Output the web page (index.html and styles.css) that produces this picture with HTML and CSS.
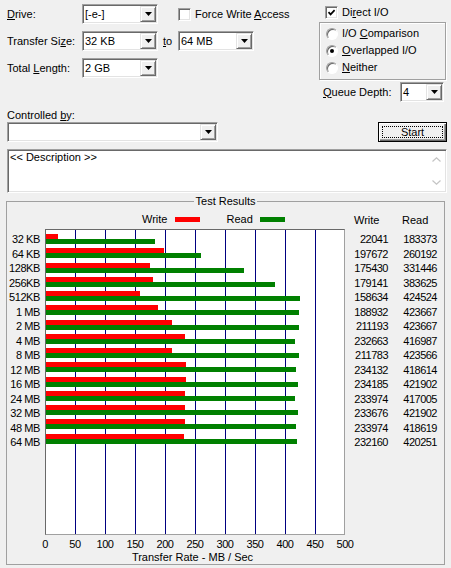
FILE: index.html
```html
<!DOCTYPE html>
<html>
<head>
<meta charset="utf-8">
<title>ATTO Disk Benchmark</title>
<link rel="stylesheet" href="styles.css">
</head>
<body>
<div class="top">
  <div class="left">
    <div class="row">
      <span class="lbl"><u>D</u>rive:</span>
      <div class="combo w76"><span class="val">[-e-]</span><span class="dd"><svg width="7" height="4" viewBox="0 0 7 4"><polygon points="0,0 7,0 3.5,4" fill="#000"/></svg></span></div>
      <div class="chk force"><span class="box"></span><span>Force Write <u>A</u>ccess</span></div>
    </div>
    <div class="row">
      <span class="lbl">Transfer Si<u>z</u>e:</span>
      <div class="combo w76"><span class="val">32 KB</span><span class="dd"><svg width="7" height="4" viewBox="0 0 7 4"><polygon points="0,0 7,0 3.5,4" fill="#000"/></svg></span></div>
      <span class="to"><u>t</u>o</span>
      <div class="combo w76"><span class="val">64 MB</span><span class="dd"><svg width="7" height="4" viewBox="0 0 7 4"><polygon points="0,0 7,0 3.5,4" fill="#000"/></svg></span></div>
    </div>
    <div class="row">
      <span class="lbl">Total <u>L</u>ength:</span>
      <div class="combo w76"><span class="val">2 GB</span><span class="dd"><svg width="7" height="4" viewBox="0 0 7 4"><polygon points="0,0 7,0 3.5,4" fill="#000"/></svg></span></div>
    </div>
  </div>
  <div class="right">
    <div class="chk direct"><span class="box"><svg width="9" height="9" viewBox="0 0 9 9"><path d="M1.5 4.2 L3.6 6.4 L7.6 2.2" fill="none" stroke="#000" stroke-width="1.7"/></svg></span><span>Di<u>r</u>ect I/O</span></div>
    <div class="radios">
      <div class="radio"><span class="circ"></span><span>I/O <u>C</u>omparison</span></div>
      <div class="radio"><span class="circ on"></span><span><u>O</u>verlapped I/O</span></div>
      <div class="radio"><span class="circ"></span><span><u>N</u>either</span></div>
    </div>
    <div class="queue">
      <span class="qlbl"><u>Q</u>ueue Depth:</span>
      <div class="combo w44"><span class="val">4</span><span class="dd"><svg width="7" height="4" viewBox="0 0 7 4"><polygon points="0,0 7,0 3.5,4" fill="#000"/></svg></span></div>
    </div>
  </div>
</div>

<div class="ctl-label">Controlled <u>b</u>y:</div>
<div class="ctl-row">
  <div class="combo w211"><span class="val"></span><span class="dd"><svg width="7" height="4" viewBox="0 0 7 4"><polygon points="0,0 7,0 3.5,4" fill="#000"/></svg></span></div>
  <div class="btn"><span>Start</span></div>
</div>

<div class="desc">
  <span class="dtext">&lt;&lt; Description &gt;&gt;</span>
  <div class="sb">
    <span class="arrow"><svg width="9" height="5" viewBox="0 0 9 5"><path d="M0.5 4.5 L4.5 0.8 L8.5 4.5" fill="none" stroke="#c4c4c4" stroke-width="1.2"/></svg></span>
    <span class="arrow"><svg width="9" height="5" viewBox="0 0 9 5"><path d="M0.5 0.5 L4.5 4.2 L8.5 0.5" fill="none" stroke="#c4c4c4" stroke-width="1.2"/></svg></span>
  </div>
</div>

<fieldset class="results">
  <legend>Test Results</legend>
  <div class="rgrid">
    <div class="clegend">
      <span>Write</span><span class="sw red sw-w"></span>
      <span class="rd">Read</span><span class="sw green sw-r"></span>
    </div>
    <div class="nhead"><span>Write</span><span class="hr">Read</span></div>

    <div class="labels">
      <div>32 KB</div><div>64 KB</div><div>128KB</div><div>256KB</div><div>512KB</div>
      <div>1 MB</div><div>2 MB</div><div>4 MB</div><div>8 MB</div><div>12 MB</div>
      <div>16 MB</div><div>24 MB</div><div>32 MB</div><div>48 MB</div><div>64 MB</div>
    </div>

    <div class="chart">
      <div class="brow"><div class="bar red" style="width:12.2px"></div><div class="bar green" style="width:109px"></div></div>
      <div class="brow"><div class="bar red" style="width:117.6px"></div><div class="bar green" style="width:155.1px"></div></div>
      <div class="brow"><div class="bar red" style="width:104.3px"></div><div class="bar green" style="width:197.9px"></div></div>
      <div class="brow"><div class="bar red" style="width:106.5px"></div><div class="bar green" style="width:229.2px"></div></div>
      <div class="brow"><div class="bar red" style="width:94.2px"></div><div class="bar green" style="width:253.7px"></div></div>
      <div class="brow"><div class="bar red" style="width:112.4px"></div><div class="bar green" style="width:253.2px"></div></div>
      <div class="brow"><div class="bar red" style="width:125.7px"></div><div class="bar green" style="width:253.2px"></div></div>
      <div class="brow"><div class="bar red" style="width:138.6px"></div><div class="bar green" style="width:249.2px"></div></div>
      <div class="brow"><div class="bar red" style="width:126.1px"></div><div class="bar green" style="width:253.1px"></div></div>
      <div class="brow"><div class="bar red" style="width:139.5px"></div><div class="bar green" style="width:250.2px"></div></div>
      <div class="brow"><div class="bar red" style="width:139.5px"></div><div class="bar green" style="width:252.1px"></div></div>
      <div class="brow"><div class="bar red" style="width:139.4px"></div><div class="bar green" style="width:249.2px"></div></div>
      <div class="brow"><div class="bar red" style="width:139.2px"></div><div class="bar green" style="width:252.1px"></div></div>
      <div class="brow"><div class="bar red" style="width:139.4px"></div><div class="bar green" style="width:250.2px"></div></div>
      <div class="brow"><div class="bar red" style="width:138.3px"></div><div class="bar green" style="width:251.2px"></div></div>
    </div>

    <div class="nums">
      <span>22041</span><span>183373</span>
      <span>197672</span><span>260192</span>
      <span>175430</span><span>331446</span>
      <span>179141</span><span>383625</span>
      <span>158634</span><span>424524</span>
      <span>188932</span><span>423667</span>
      <span>211193</span><span>423667</span>
      <span>232663</span><span>416987</span>
      <span>211783</span><span>423566</span>
      <span>234132</span><span>418614</span>
      <span>234185</span><span>421902</span>
      <span>233974</span><span>417005</span>
      <span>233676</span><span>421902</span>
      <span>233974</span><span>418619</span>
      <span>232160</span><span>420251</span>
    </div>

    <div class="axis">
      <div class="ticks">
        <span>0</span><span>50</span><span>100</span><span>150</span><span>200</span><span>250</span>
        <span>300</span><span>350</span><span>400</span><span>450</span><span>500</span>
      </div>
      <div class="atitle">Transfer Rate - MB / Sec</div>
    </div>
  </div>
</fieldset>
</body>
</html>
```

FILE: styles.css
```css
* { box-sizing: border-box; }

html, body { margin: 0; padding: 0; }

body {
  width: 451px;
  height: 568px;
  overflow: hidden;
  background: #f0f0f0;
  font-family: "Liberation Sans", Arial, sans-serif;
  font-size: 11px;
  line-height: 13px;
  color: #000;
}

u { text-decoration: underline; text-underline-offset: 1px; }

/* ---------- top controls ---------- */
.top { display: flex; padding-top: 4px; }

.left { width: 319px; padding-left: 7px; }

.row {
  display: flex;
  align-items: center;
  height: 20px;
  margin-bottom: 7px;
}

.lbl { width: 75px; flex: none; }

.combo {
  display: flex;
  flex: none;
  height: 20px;
  padding: 1px;
  background: #fff;
  border: 1px solid;
  border-color: #a0a0a0 #fff #fff #a0a0a0;
  box-shadow: inset 1px 1px #696969, inset -1px -1px #e3e3e3;
}

.w76 { width: 76px; }
.w44 { width: 44px; }
.w211 { width: 211px; }

.val {
  flex: 1;
  padding-left: 1px;
  line-height: 16px;
  white-space: nowrap;
}

.dd {
  width: 16px;
  height: 16px;
  display: flex;
  align-items: center;
  justify-content: center;
  background: #f0f0f0;
  border: 1px solid;
  border-color: #e3e3e3 #696969 #696969 #e3e3e3;
  box-shadow: inset 1px 1px #fff, inset -1px -1px #a0a0a0;
}

.dd svg { display: block; }

.to { width: 15px; margin-left: 5px; }

.chk { display: flex; align-items: center; white-space: nowrap; }

.force { margin-left: 20px; }

.box {
  width: 13px;
  height: 13px;
  flex: none;
  margin-right: 4px;
  display: flex;
  align-items: center;
  justify-content: center;
  background: #fff;
  border: 1px solid;
  border-color: #a0a0a0 #fff #fff #a0a0a0;
  box-shadow: inset 1px 1px #696969, inset -1px -1px #e3e3e3;
}

.box svg { display: block; }

.right { width: 127px; }

.direct { height: 16px; margin-left: 6px; }

.radios {
  margin-top: 2px;
  height: 58px;
  padding: 2px 0 0 6px;
  border: 1px solid #a0a0a0;
  box-shadow: inset 1px 1px #fff, 1px 1px #fff;
}

.radio { display: flex; align-items: center; height: 17px; white-space: nowrap; }

.circ {
  width: 12px;
  height: 12px;
  flex: none;
  margin-right: 4px;
  border-radius: 50%;
  background: #fff;
  border: 1px solid;
  border-color: #a0a0a0 #fff #fff #a0a0a0;
  box-shadow: inset 1px 1px #696969;
  display: flex;
  align-items: center;
  justify-content: center;
}

.circ.on::after {
  content: "";
  width: 4px;
  height: 4px;
  border-radius: 50%;
  background: #000;
}

.queue {
  display: flex;
  align-items: center;
  height: 20px;
  margin-top: 2px;
  padding-left: 4px;
}

.qlbl { width: 77px; flex: none; }

/* ---------- controlled by ---------- */
.ctl-label { margin: 7px 0 0 7px; }

.ctl-row {
  display: flex;
  justify-content: space-between;
  width: 440px;
  margin-left: 7px;
}

.btn {
  width: 69px;
  height: 20px;
  padding: 3px;
  background: #f0f0f0;
  border: 1px solid #000;
  box-shadow: inset 1px 1px #fff, inset -1px -1px #696969, inset -2px -2px #a0a0a0;
}

.btn span {
  display: flex;
  height: 100%;
  align-items: center;
  justify-content: center;
  border: 1px dotted #000;
}

/* ---------- description ---------- */
.desc {
  display: flex;
  width: 440px;
  height: 44px;
  margin: 7px 0 0 7px;
  padding: 1px;
  background: #fff;
  border: 1px solid;
  border-color: #a0a0a0 #fff #fff #a0a0a0;
  box-shadow: inset 1px 1px #696969, inset -1px -1px #e3e3e3;
}

.dtext { flex: 1; padding-left: 1px; }

.sb {
  width: 17px;
  display: flex;
  flex-direction: column;
  justify-content: space-between;
}

.arrow {
  height: 17px;
  display: flex;
  align-items: center;
  justify-content: center;
}

.arrow svg { display: block; }

/* ---------- results ---------- */
.results {
  margin: 2px 0 0 6px;
  width: 439px;
  min-inline-size: 0;
  padding: 0;
  border: 1px solid #a0a0a0;
}

.results legend {
  margin: 0 auto;
  padding: 0 2px;
  line-height: 13px;
}

.rgrid {
  display: grid;
  grid-template-columns: 38px 300px 99px;
  grid-template-rows: 21px 306px 29px;
}

.clegend {
  grid-column: 2;
  grid-row: 1;
  display: flex;
  align-items: center;
  padding: 2px 0 0 97px;
}

.sw { width: 25px; height: 5px; }
.sw-w { margin-left: 8px; }
.rd { margin-left: 26px; }
.sw-r { margin-left: 7px; }

.red { background: #ff0000; }
.green { background: #008000; }

.nhead {
  grid-column: 3;
  grid-row: 1;
  display: grid;
  grid-template-columns: 34px 49px;
  padding: 6px 0 0 9px;
}

.hr { padding-left: 14px; }

.labels {
  grid-column: 1;
  grid-row: 2;
  padding: 3px 5px 0 0;
  text-align: right;
  line-height: 14.5px;
  letter-spacing: -0.4px;
  white-space: nowrap;
}

.chart {
  grid-column: 2;
  grid-row: 2;
  padding-top: 4px;
  background-color: #fff;
  background-image: linear-gradient(to right, transparent 29px, #000080 29px, #000080 30px, transparent 30px);
  background-size: 30px 100%;
  background-repeat: repeat-x;
  border: 1px solid;
  border-color: #696969 #a0a0a0 #a0a0a0 #696969;
}

.brow { height: 14.25px; }

.bar { height: 5px; }

.nums {
  grid-column: 3;
  grid-row: 2;
  display: grid;
  grid-template-columns: 34px 49px;
  grid-auto-rows: 14.5px;
  align-content: start;
  padding: 3px 0 0 9px;
  line-height: 14.5px;
  letter-spacing: -0.5px;
  text-align: right;
}

.axis {
  grid-column: 2;
  grid-row: 3;
  padding-top: 2.5px;
}

.ticks {
  display: flex;
  width: 330px;
  margin-left: -15px;
  letter-spacing: -0.4px;
}

.ticks span { width: 30px; text-align: center; }

.atitle { text-align: center; padding-right: 5px; }
```
